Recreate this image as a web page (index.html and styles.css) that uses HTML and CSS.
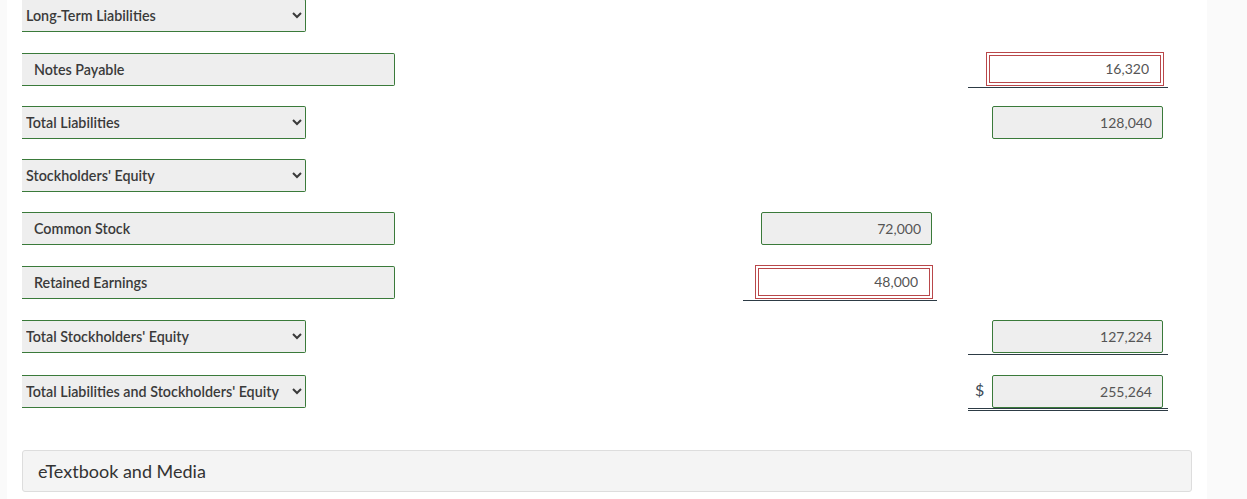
FILE: index.html
```html
<!DOCTYPE html>
<html lang="en">
<head>
<meta charset="utf-8">
<title>Balance Sheet</title>
<link rel="stylesheet" href="styles.css">
</head>
<body>
<div class="page">
  <div class="content">
    <div class="row r0 g21">
      <div class="label"><select class="sel"><option>Long-Term Liabilities</option></select></div>
      <div class="cell c2"></div>
      <div class="cell c3"></div>
    </div>
    <div class="row g20">
      <div class="label"><input class="txt" type="text" value="Notes Payable" readonly></div>
      <div class="cell c2"></div>
      <div class="cell c3 under"><input class="num err" type="text" value="16,320" readonly></div>
    </div>
    <div class="row g20">
      <div class="label"><select class="sel"><option>Total Liabilities</option></select></div>
      <div class="cell c2"></div>
      <div class="cell c3"><input class="num ok" type="text" value="128,040" readonly></div>
    </div>
    <div class="row g20">
      <div class="label"><select class="sel"><option>Stockholders' Equity</option></select></div>
      <div class="cell c2"></div>
      <div class="cell c3"></div>
    </div>
    <div class="row g21">
      <div class="label"><input class="txt" type="text" value="Common Stock" readonly></div>
      <div class="cell c2"><input class="num ok" type="text" value="72,000" readonly></div>
      <div class="cell c3"></div>
    </div>
    <div class="row g21">
      <div class="label"><input class="txt" type="text" value="Retained Earnings" readonly></div>
      <div class="cell c2 under"><input class="num err" type="text" value="48,000" readonly></div>
      <div class="cell c3"></div>
    </div>
    <div class="row g22">
      <div class="label"><select class="sel"><option>Total Stockholders' Equity</option></select></div>
      <div class="cell c2"></div>
      <div class="cell c3 under"><input class="num ok" type="text" value="127,224" readonly></div>
    </div>
    <div class="row last">
      <div class="label"><select class="sel"><option>Total Liabilities and Stockholders' Equity</option></select></div>
      <div class="cell c2"></div>
      <div class="cell c3 double"><span class="sign">$</span><input class="num ok" type="text" value="255,264" readonly></div>
    </div>
    <div class="media">eTextbook and Media</div>
  </div>
</div>
</body>
</html>
```
FILE: styles.css
```css
html, body {
  margin: 0;
  padding: 0;
  background: #fafafa;
}
body {
  font-family: Lato, "Open Sans", "Liberation Sans", sans-serif;
  color: #333;
  height: 499px;
  overflow: hidden;
}
.page {
  display: flex;
  padding-left: 7px;
}
.content {
  width: 1185px;
  background: #fff;
  padding-left: 15px;
  height: 499px;
  box-sizing: content-box;
}
.row {
  display: grid;
  grid-template-columns: 721px 194px 231px;
  grid-template-rows: 33px;
  align-items: start;
}
.r0 { margin-top: -1px; }
.g20 { margin-bottom: 20px; }
.g21 { margin-bottom: 21px; }
.g22 { margin-bottom: 22px; }
.last { margin-bottom: 42px; }
.c3 { margin-left: 31px; }
.label { display: flex; }
.sel {
  width: 284px;
  height: 33px;
  background-color: #eee;
  border: 1px solid #3a7a3a;
  border-left: none;
  border-radius: 0 2px 2px 0;
  font-family: Lato, "Open Sans", "Liberation Sans", sans-serif;
  font-size: 14.3px;
  font-weight: 600;
  color: #3a3a3a;
  padding: 0 0 1px 0;
  margin: 0;
  box-sizing: border-box;
}
.txt {
  width: 373px;
  height: 33px;
  background: #eee;
  border: 1px solid #3a7a3a;
  border-left: none;
  border-radius: 0 2px 2px 0;
  font-family: Lato, "Open Sans", "Liberation Sans", sans-serif;
  font-size: 14.3px;
  font-weight: 600;
  color: #3a3a3a;
  padding: 0 0 1px 12px;
  margin: 0;
  box-sizing: border-box;
  outline: none;
}
.cell {
  display: flex;
  align-items: flex-start;
  justify-content: flex-end;
  height: 33px;
  padding-right: 5px;
}
.cell.under {
  height: 34px;
  border-bottom: 1px solid #2d3b45;
}
.cell.double {
  height: 33px;
  border-bottom: 3px double #2d3b45;
}
.sign {
  margin-right: auto;
  padding-left: 7px;
  font-size: 16px;
  color: #3b4a56;
  line-height: 30px;
}
.num {
  height: 33px;
  width: 171px;
  box-sizing: border-box;
  text-align: right;
  font-family: Lato, "Open Sans", "Liberation Sans", sans-serif;
  font-size: 14px;
  color: #555;
  margin: 0;
  outline: none;
  padding-bottom: 1px;
}
.num.ok {
  background: #eee;
  border: 1px solid #3a7a3a;
  border-radius: 2px;
  padding: 0 10px 1px 0;
}
.num.err {
  background: #fff;
  width: 172px;
  height: 28px;
  margin-top: 2px;
  margin-right: 2px;
  border: 1px solid #b9474a;
  outline: 1px solid #b9474a;
  outline-offset: 2px;
  border-radius: 0;
  padding: 0 11px 2px 0;
}
.media {
  width: 1170px;
  height: 42px;
  box-sizing: border-box;
  background: #f4f4f4;
  border: 1px solid #ddd;
  border-radius: 3px;
  font-size: 18px;
  color: #333;
  padding: 0 0 1px 15px;
  display: flex;
  align-items: center;
}
```
